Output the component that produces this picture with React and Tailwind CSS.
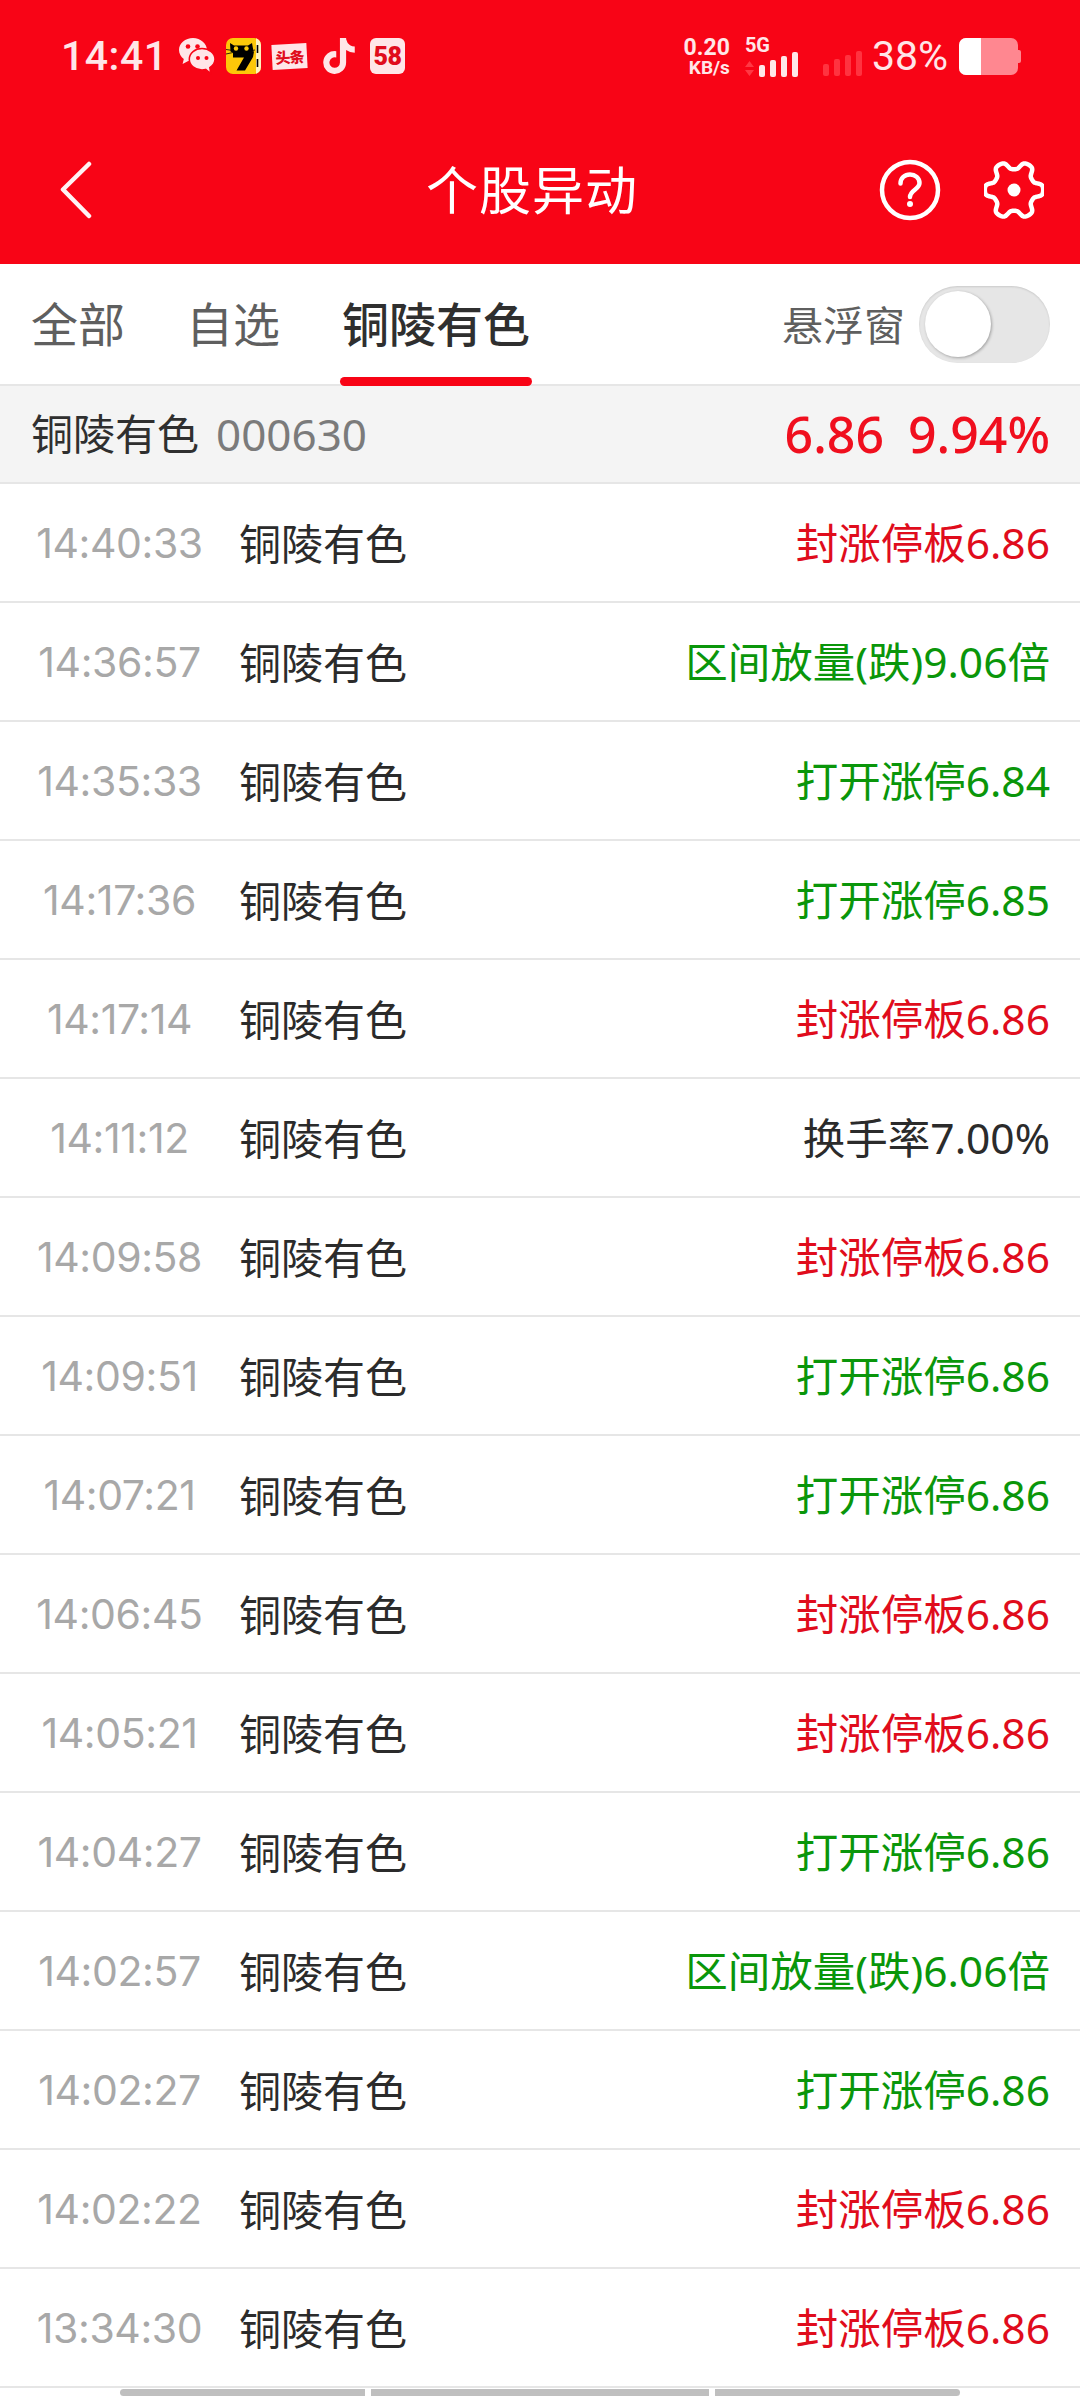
import React from 'react';
import { FaTiktok } from 'react-icons/fa6';

const NAME = '铜陵有色';
const UP = 'text-[#e00c1c]';
const DOWN = 'text-[#0a960a]';
const FLAT = 'text-[#2b2b2b]';

const rows = [
  ['14:40:33', '封涨停板6.86', UP],
  ['14:36:57', '区间放量(跌)9.06倍', DOWN],
  ['14:35:33', '打开涨停6.84', DOWN],
  ['14:17:36', '打开涨停6.85', DOWN],
  ['14:17:14', '封涨停板6.86', UP],
  ['14:11:12', '换手率7.00%', FLAT],
  ['14:09:58', '封涨停板6.86', UP],
  ['14:09:51', '打开涨停6.86', DOWN],
  ['14:07:21', '打开涨停6.86', DOWN],
  ['14:06:45', '封涨停板6.86', UP],
  ['14:05:21', '封涨停板6.86', UP],
  ['14:04:27', '打开涨停6.86', DOWN],
  ['14:02:57', '区间放量(跌)6.06倍', DOWN],
  ['14:02:27', '打开涨停6.86', DOWN],
  ['14:02:22', '封涨停板6.86', UP],
  ['13:34:30', '封涨停板6.86', UP],
];

// six flat-topped teeth around the centre
const gearPoints = Array.from({ length: 180 }, (_, i) => {
  const a = (i / 180) * Math.PI * 2;
  const r = 25 + 4.2 * (Math.tanh(1.8 * Math.cos(6 * a)) / Math.tanh(1.8));
  return `${(30 + r * Math.cos(a)).toFixed(2)},${(30 + r * Math.sin(a)).toFixed(2)}`;
}).join(' ');

function WeChatIcon() {
  return (
    <svg width="36" height="37" viewBox="0 0 36 37" className="shrink-0">
      <path d="M14 0C6.300 0 0 5.300 0 12c0 3.600 1.900 6.800 4.800 9l-1.200 5 5.600-3c1.500.4 3.100.6 4.800.6C21.700 23.600 28 18.300 28 12S21.700 0 14 0z" fill="#ffe6e8" />
      <circle cx="9" cy="8.500" r="2.300" fill="#f80416" />
      <circle cx="18.500" cy="8.500" r="2.300" fill="#f80416" />
      <path d="M23 10.500c-7 0-12.700 4.800-12.700 10.700S16 31.900 23 31.900c1.300 0 2.500-.2 3.700-.5l5 4.100-.9-6c3-2 5.200-5 5.200-8.300 0-5.900-5.900-10.700-13-10.700z" fill="#ffe6e8" stroke="#f80416" strokeWidth="1.500" />
      <circle cx="19" cy="20" r="2" fill="#f80416" />
      <circle cx="27.500" cy="20" r="2" fill="#f80416" />
    </svg>
  );
}

function CatSevenIcon() {
  return (
    <div className="relative h-[36px] w-[35px] shrink-0 overflow-hidden rounded-[7px] bg-[#fdc809]">
      <svg width="35" height="36" viewBox="0 0 35 36" className="absolute inset-0">
        <rect x="30" y="0" width="5" height="36" fill="#fff3c0" />
        <path d="M4 5l4 2.500h14L26 5l1.500 8.500c-3 1.500-6 1.500-9 1.500h-7c-3 0-5-.5-7-1.500z" fill="#000" />
        <circle cx="10" cy="10.500" r="2.200" fill="#fdc809" />
        <circle cx="20.500" cy="10.500" r="2.200" fill="#fdc809" />
        <path d="M7 13.500h21l-1 5.500-8 13.500h-8.500l7.500-13H7z" fill="#000" />
        <path d="M0 11.500l7 1M0 16l7-1.500M29 12l-3 .5" stroke="#000" strokeWidth="0.800" />
        <path d="M31.500 7v8M31.500 21v8" stroke="#000" strokeWidth="1.600" />
      </svg>
    </div>
  );
}

function ToutiaoIcon() {
  return (
    <div className="flex h-[25px] w-[35px] shrink-0 -rotate-3 items-center justify-center bg-[#ffe6e8] font-['Noto_Sans_CJK_SC',sans-serif] text-[15px] font-black leading-none tracking-[-1px] text-[#e00c1c]">
      头条
    </div>
  );
}

function SignalBars({ className }) {
  const heights = ['h-[12px]', 'h-[17px]', 'h-[21px]', 'h-[25px]'];
  return (
    <div className={`flex items-end gap-[5px] ${className}`}>
      {heights.map((h) => (
        <span key={h} className={`w-[6px] rounded-[2px] bg-current ${h}`} />
      ))}
    </div>
  );
}

function StatusBar() {
  return (
    <div className="flex h-[112px] items-center justify-between pl-[61px] pr-[59px] font-['Roboto',sans-serif] text-[#ffe6e8]">
      <div className="flex items-center">
        <span className="w-[118px] text-[41px] font-medium leading-none tracking-[0.5px]">14:41</span>
        <WeChatIcon />
        <div className="ml-[11px]"><CatSevenIcon /></div>
        <div className="ml-[11px]"><ToutiaoIcon /></div>
        <FaTiktok className="ml-[14px] shrink-0 text-[36px]" />
        <div className="ml-[13px] flex h-[36px] w-[35px] shrink-0 items-center justify-center rounded-[6px] bg-[#ffe6e8] text-[25px] font-black leading-none tracking-[-0.5px] text-[#e00c1c]">58</div>
      </div>
      <div className="flex items-center">
        <div className="flex flex-col items-end font-bold leading-none">
          <span className="text-[23px]">0.20</span>
          <span className="mt-[-1px] text-[19px]">KB/s</span>
        </div>
        <div className="ml-[15px] flex flex-col">
          <span className="text-[20px] font-bold leading-none">5G</span>
          <div className="-mt-[3px] flex items-end">
            <svg width="9" height="15" viewBox="0 0 9 15" className="mb-[1px] mr-[5px]">
              <path d="M4.500 0L9 6H0zM0 9h9l-4.500 6z" fill="#ff3844" />
            </svg>
            <SignalBars className="text-[#ffe6e8]" />
          </div>
        </div>
        <SignalBars className="ml-[25px] self-end pb-[1px] text-[#ff3340]" />
        <span className="ml-[10px] text-[41px] leading-none">38%</span>
        <div className="ml-[11px] flex items-center">
          <div className="flex h-[37px] w-[59px] overflow-hidden rounded-[7px] bg-[#ff8790]">
            <div className="w-[22px] bg-white" />
          </div>
          <div className="h-[13px] w-[3px] rounded-r-[2px] bg-[#ff8790]" />
        </div>
      </div>
    </div>
  );
}

function NavBar() {
  return (
    <div className="relative flex h-[152px] items-center justify-center pr-[16px] pt-[4px]">
      <svg width="32" height="58" viewBox="0 0 32 58" className="absolute left-[60px] top-[49px]" fill="none" stroke="#fff3f4" strokeWidth="4.500" strokeLinecap="round" strokeLinejoin="round">
        <path d="M29 3L3 28.500 29 55" />
      </svg>
      <h1 className="text-[52px] font-normal leading-none tracking-[1px] text-white">个股异动</h1>
      <svg width="62" height="62" viewBox="0 0 62 62" className="absolute left-[879px] top-[47px]" fill="none" stroke="#fff" strokeWidth="4.500" strokeLinecap="round">
        <circle cx="31" cy="31" r="28" />
        <path d="M21.500 24.500c0-5.500 4.300-9 9.500-9s9.500 3.500 9.500 8.500c0 6.500-9.500 7-9.500 14" />
        <circle cx="31" cy="45" r="3" fill="#fff" stroke="none" />
      </svg>
      <svg width="60" height="60" viewBox="0 0 60 60" className="absolute left-[984px] top-[48px]" fill="none" stroke="#fff" strokeWidth="4.500" strokeLinejoin="round">
        <polygon points={gearPoints} />
        <circle cx="30" cy="30" r="6.500" fill="#fff" stroke="none" />
      </svg>
    </div>
  );
}

function Tabs() {
  return (
    <div className="flex h-[122px] items-center justify-between border-b-2 border-[#e6e6e6] pl-[31px] pr-[30px]">
      <div className="flex h-full items-center text-[47px] leading-none">
        <span className="text-[#5f5f5f]">全部</span>
        <span className="ml-[61px] text-[#5f5f5f]">自选</span>
        <div className="relative ml-[62px] flex h-full items-center font-medium text-[#2f2f2f]">
          <span>{NAME}</span>
          <span className="absolute -bottom-[2px] -left-[2px] right-[-2px] h-[9px] rounded-full bg-[#f80416]" />
        </div>
      </div>
      <div className="flex items-center">
        <span className="pt-[2px] text-[41px] leading-none text-[#5f5f5f]">悬浮窗</span>
        <div className="ml-[14px] flex h-[77px] w-[131px] items-center rounded-full bg-[#e6e6e6] pl-[6px] shadow-[inset_0_1px_2px_rgba(0,0,0,0.12)]">
          <span className="h-[66px] w-[66px] rounded-full bg-white shadow-[1px_1px_3px_rgba(0,0,0,0.3)]" />
        </div>
      </div>
    </div>
  );
}

function StockHeader() {
  return (
    <div className="flex h-[98px] items-center justify-between border-b-2 border-[#e6e6e6] bg-[#f4f4f4] pl-[31px] pr-[30px]">
      <div className="flex items-center leading-none">
        <span className="text-[42px] text-[#2f2f2f]">{NAME}</span>
        <span className="ml-[17px] font-['Noto_Sans',sans-serif] text-[44px] text-[#7b7b7b]">000630</span>
      </div>
      <div className="flex items-center font-['Noto_Sans',sans-serif] text-[50px] font-medium leading-none text-[#f00f1e]">
        <span>6.86</span>
        <span className="ml-[24px]">9.94%</span>
      </div>
    </div>
  );
}

function Row({ time, label, color }) {
  return (
    <div className="flex h-[119px] items-center border-b-2 border-[#e6e6e6] pr-[30px] pt-[2px] text-[42px] leading-none">
      <span className="w-[239px] text-center font-['Inter',sans-serif] text-[41px] tracking-[-0.4px] text-[#a8a8a8]">{time}</span>
      <span className="text-[#2b2b2b]">{NAME}</span>
      <span className={`ml-auto text-[42.5px] ${color}`}>{label}</span>
    </div>
  );
}

export default function App() {
  return (
    <div className="relative h-[2400px] w-[1080px] overflow-hidden bg-white font-['Noto_Sans','Noto_Sans_CJK_SC',sans-serif]">
      <header className="bg-[#f80416]">
        <StatusBar />
        <NavBar />
      </header>
      <Tabs />
      <StockHeader />
      {rows.map(([time, label, color]) => (
        <Row key={time} time={time} label={label} color={color} />
      ))}
      {/* scroll indicator segments */}
      <div className="mx-[120px] mt-[1px] flex h-[7px] gap-[6px]">
        <span className="w-[245px] rounded-l-full bg-[#bfbfbf]" />
        <span className="w-[338px] bg-[#bfbfbf]" />
        <span className="w-[245px] rounded-r-full bg-[#bfbfbf]" />
      </div>
    </div>
  );
}
